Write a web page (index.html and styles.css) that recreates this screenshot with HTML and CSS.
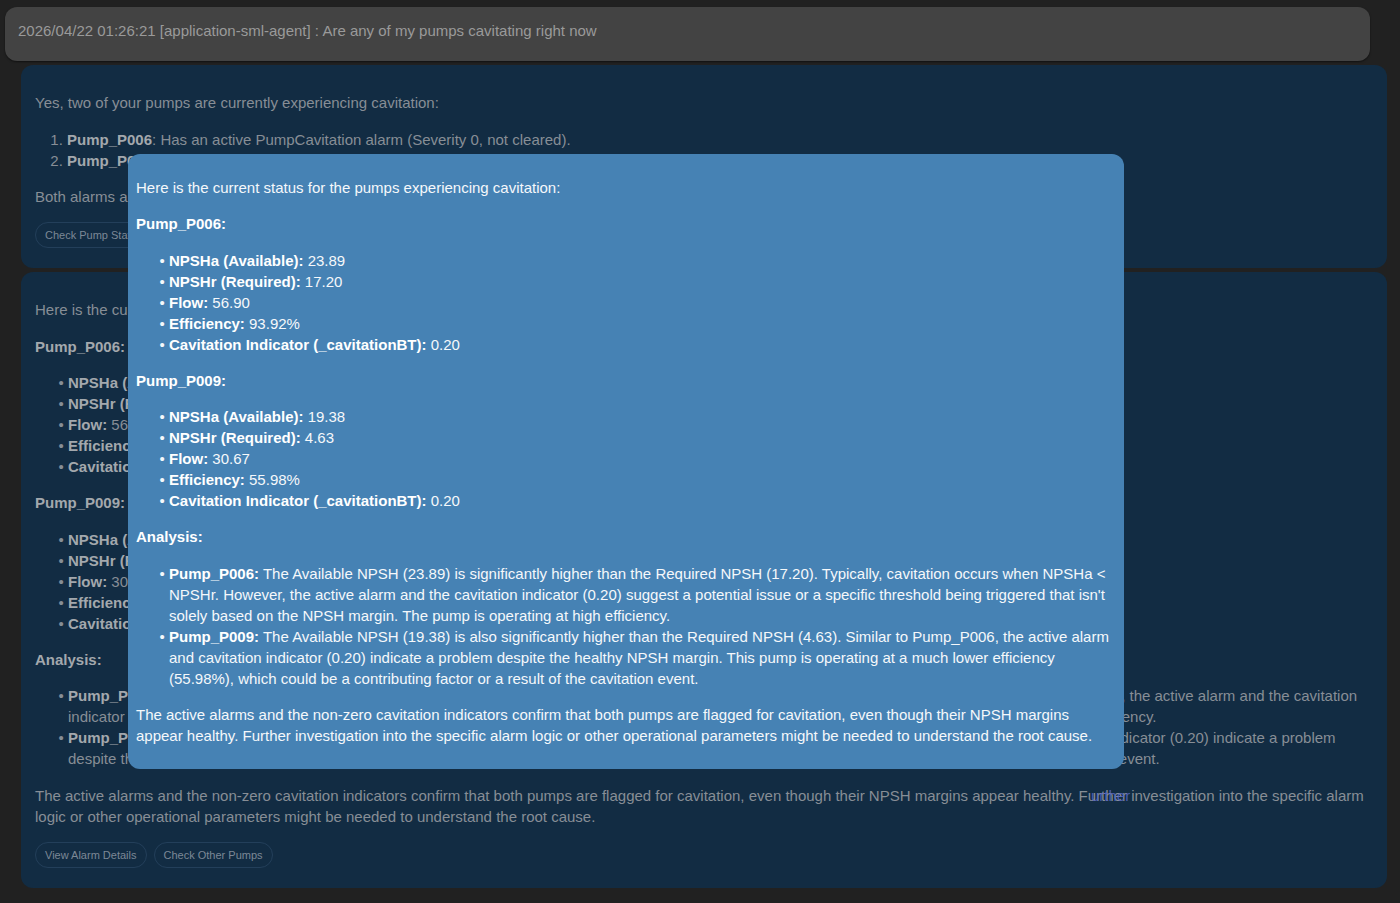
FILE: index.html
```html
<!DOCTYPE html>
<html lang="en">
<head>
<meta charset="utf-8">
<title>application-sml-agent</title>
<link rel="stylesheet" href="styles.css">
</head>
<body>
<div class="page">
  <div class="query">2026/04/22 01:26:21 [application-sml-agent] : Are any of my pumps cavitating right now</div>

  <div class="card">
    <p>Yes, two of your pumps are currently experiencing cavitation:</p>
    <ol>
      <li><strong>Pump_P006</strong>: Has an active PumpCavitation alarm (Severity 0, not cleared).</li>
      <li><strong>Pump_P009</strong>: Has an active PumpCavitation alarm (Severity 0, not cleared).</li>
    </ol>
    <p>Both alarms are currently active and have not been cleared.</p>
    <div class="actions">
      <button class="chip">Check Pump Status</button>
    </div>
  </div>

  <div class="card">
    <p>Here is the current status for the pumps experiencing cavitation:</p>
    <p><strong>Pump_P006:</strong></p>
    <ul>
      <li><strong>NPSHa (Available):</strong> 23.89</li>
      <li><strong>NPSHr (Required):</strong> 17.20</li>
      <li><strong>Flow:</strong> 56.90</li>
      <li><strong>Efficiency:</strong> 93.92%</li>
      <li><strong>Cavitation Indicator (_cavitationBT):</strong> 0.20</li>
    </ul>
    <p><strong>Pump_P009:</strong></p>
    <ul>
      <li><strong>NPSHa (Available):</strong> 19.38</li>
      <li><strong>NPSHr (Required):</strong> 4.63</li>
      <li><strong>Flow:</strong> 30.67</li>
      <li><strong>Efficiency:</strong> 55.98%</li>
      <li><strong>Cavitation Indicator (_cavitationBT):</strong> 0.20</li>
    </ul>
    <p><strong>Analysis:</strong></p>
    <ul>
      <li><strong>Pump_P006:</strong> The Available NPSH (23.89) is significantly higher than the Required NPSH (17.20). Typically, cavitation occurs when NPSHa &lt; NPSHr. However, the active alarm and the cavitation indicator (0.20) suggest a potential issue or a specific threshold being triggered that isn't solely based on the NPSH margin. The pump is operating at high efficiency.</li>
      <li><strong>Pump_P009:</strong> The Available NPSH (19.38) is also significantly higher than the Required NPSH (4.63). Similar to Pump_P006, the active alarm and cavitation indicator (0.20) indicate a problem despite the healthy NPSH margin. This pump is operating at a much lower efficiency (55.98%), which could be a contributing factor or a result of the cavitation event.</li>
    </ul>
    <p>The active alarms and the non-zero cavitation indicators confirm that both pumps are flagged for cavitation, even though their NPSH margins appear healthy. Further investigation into the specific alarm logic or other operational parameters might be needed to understand the root cause.</p>
    <div class="actions">
      <button class="chip">View Alarm Details</button>
      <button class="chip">Check Other Pumps</button>
    </div>
  </div>

  <div class="popup">
    <p>Here is the current status for the pumps experiencing cavitation:</p>
    <p><strong>Pump_P006:</strong></p>
    <ul>
      <li><strong>NPSHa (Available):</strong> 23.89</li>
      <li><strong>NPSHr (Required):</strong> 17.20</li>
      <li><strong>Flow:</strong> 56.90</li>
      <li><strong>Efficiency:</strong> 93.92%</li>
      <li><strong>Cavitation Indicator (_cavitationBT):</strong> 0.20</li>
    </ul>
    <p><strong>Pump_P009:</strong></p>
    <ul>
      <li><strong>NPSHa (Available):</strong> 19.38</li>
      <li><strong>NPSHr (Required):</strong> 4.63</li>
      <li><strong>Flow:</strong> 30.67</li>
      <li><strong>Efficiency:</strong> 55.98%</li>
      <li><strong>Cavitation Indicator (_cavitationBT):</strong> 0.20</li>
    </ul>
    <p><strong>Analysis:</strong></p>
    <ul>
      <li><strong>Pump_P006:</strong> The Available NPSH (23.89) is significantly higher than the Required NPSH (17.20). Typically, cavitation occurs when NPSHa &lt; NPSHr. However, the active alarm and the cavitation indicator (0.20) suggest a potential issue or a specific threshold being triggered that isn't solely based on the NPSH margin. The pump is operating at high efficiency.</li>
      <li><strong>Pump_P009:</strong> The Available NPSH (19.38) is also significantly higher than the Required NPSH (4.63). Similar to Pump_P006, the active alarm and cavitation indicator (0.20) indicate a problem despite the healthy NPSH margin. This pump is operating at a much lower efficiency (55.98%), which could be a contributing factor or a result of the cavitation event.</li>
    </ul>
    <p>The active alarms and the non-zero cavitation indicators confirm that both pumps are flagged for cavitation, even though their NPSH margins appear healthy. Further investigation into the specific alarm logic or other operational parameters might be needed to understand the root cause.</p>
  </div>

  <span class="ghost">urther</span>
</div>
</body>
</html>
```

FILE: styles.css
```css
html, body {
  margin: 0;
  padding: 0;
  background: #212121;
}

body {
  font-family: "Liberation Sans", Arial, Helvetica, sans-serif;
  font-size: 15px;
  line-height: 21px;
}

.page {
  position: relative;
  padding-top: 7px;
  height: 896px;
}

.query {
  margin-left: 5px;
  width: 1365px;
  box-sizing: border-box;
  height: 54px;
  padding: 13px 13px 0;
  background: #434343;
  color: #9a9a9a;
  border-radius: 12px;
  box-shadow: 0 1px 2px rgba(0, 0, 0, 0.5);
}

.card {
  margin: 4px 0 0 21px;
  width: 1366px;
  box-sizing: border-box;
  padding: 12px 14px 20px;
  background: #122c43;
  color: #878e96;
  border-radius: 12px;
}

.card p,
.popup p {
  margin: 15.3px 0;
}

.card ol {
  margin: 15.3px 0;
  padding-left: 32px;
}

.card ul,
.popup ul {
  margin: 15.3px 0;
  padding-left: 33px;
  list-style: none;
}

.card ul li::marker,
.popup ul li::marker {
  content: "\2022  ";
}

.card ul li,
.popup ul li {
  list-style: disc;
}

.card strong {
  color: #a3a8ad;
  font-weight: bold;
}

.actions {
  display: flex;
  gap: 7px;
  margin-top: 1px;
}

.chip {
  font-family: "Liberation Sans", Arial, Helvetica, sans-serif;
  font-size: 11px;
  line-height: 14px;
  height: 26px;
  padding: 5px 9px;
  box-sizing: border-box;
  background: transparent;
  color: #7c8896;
  border: 1px solid #233f5a;
  border-radius: 13px;
}

.popup {
  position: absolute;
  left: 128px;
  top: 154px;
  width: 996px;
  box-sizing: border-box;
  padding: 8px 8px;
  background: #4682b4;
  color: #f5f8fb;
  border-radius: 12px;
}

.popup strong {
  color: #ffffff;
  font-weight: bold;
}

.popup > :first-child {
  margin-top: 15px;
}

.ghost {
  position: absolute;
  left: 1091px;
  top: 785px;
  color: rgba(86, 104, 196, 0.85);
  font-size: 15px;
  line-height: 21px;
  pointer-events: none;
}
```
